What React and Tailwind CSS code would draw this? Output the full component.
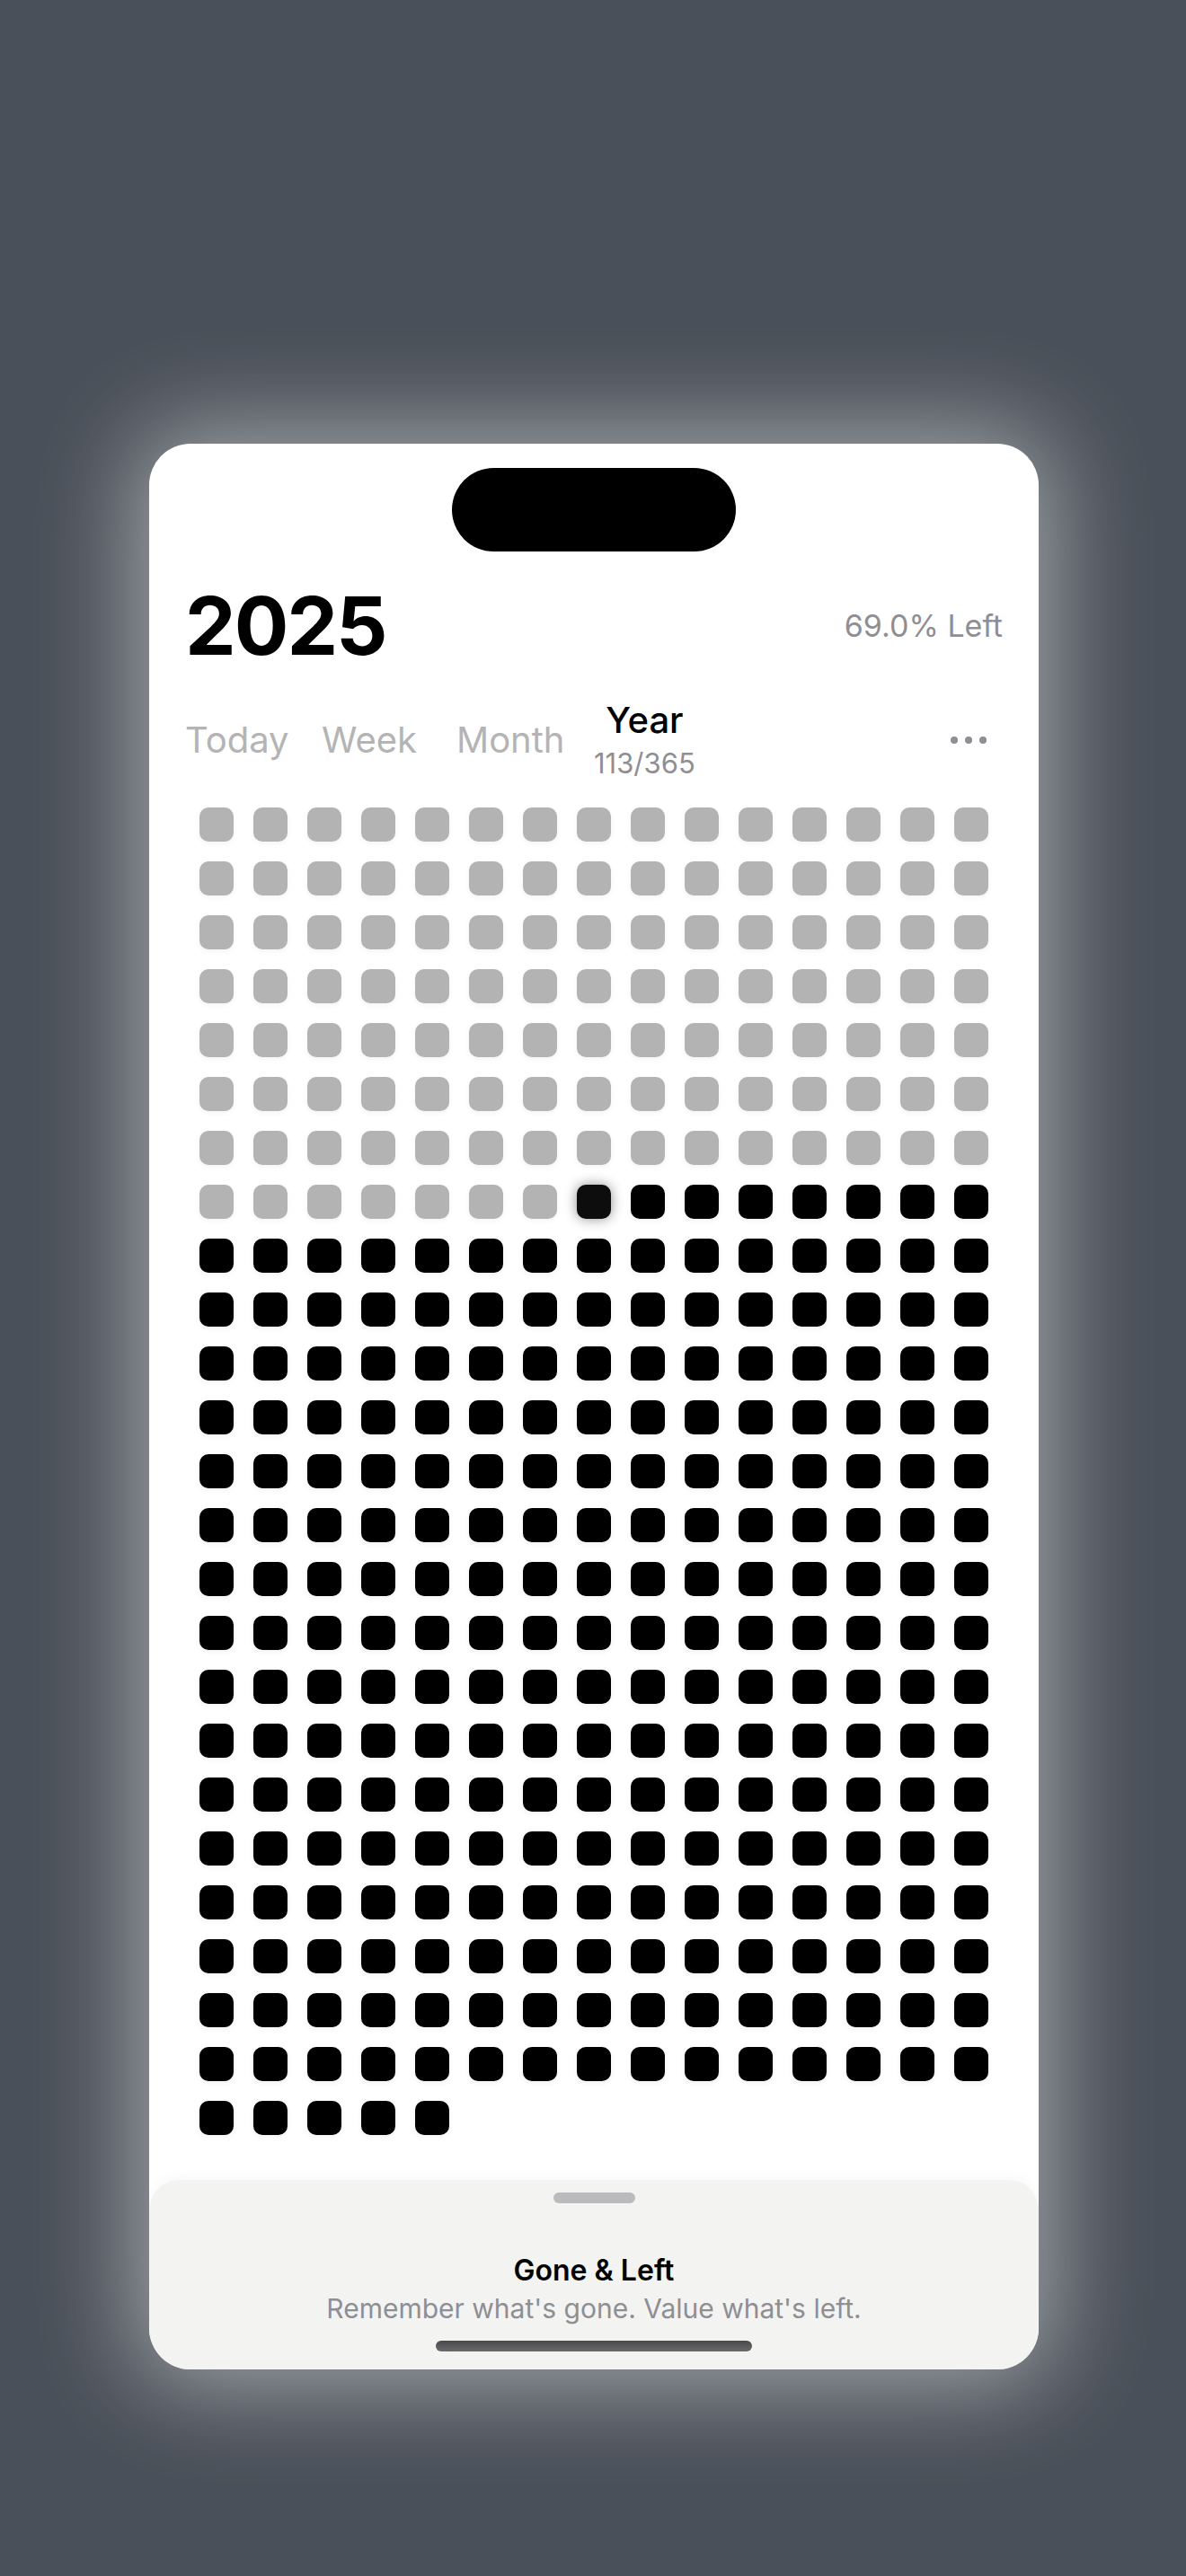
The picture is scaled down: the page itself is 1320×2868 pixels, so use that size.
import React from 'react';

const TOTAL_DAYS = 365;
const TODAY_INDEX = 112; // day 113 of the year

const tabs = [
  { label: 'Today', width: 'w-[152px]' },
  { label: 'Week', width: 'w-[150px]' },
  { label: 'Month', width: 'w-[153px]' },
];

const DayCell = ({ index }) => {
  if (index === TODAY_INDEX) {
    return <div className="w-[38px] h-[38px] rounded-[10px] bg-[#0d0d0d] shadow-[0_0_14px_rgba(0,0,0,0.45)]" />;
  }
  if (index < TODAY_INDEX) {
    return <div className="w-[38px] h-[38px] rounded-[10px] bg-[#b3b3b3] shadow-[0_2px_6px_rgba(0,0,0,0.05)]" />;
  }
  return <div className="w-[38px] h-[38px] rounded-[10px] bg-black shadow-[0_2px_6px_rgba(0,0,0,0.06)]" />;
};

const App = () => {
  const days = Array.from({ length: TOTAL_DAYS }, (_, i) => i);

  return (
    <div
      className="w-full h-[2868px] bg-[#4a5059] flex justify-center pt-[494px] pl-[2px]"
      style={{ fontFamily: 'Inter, "Noto Sans", sans-serif' }}
    >
      <div className="w-[990px] h-[2144px] bg-white rounded-[46px] overflow-hidden flex flex-col shadow-[0_0_110px_18px_rgba(255,255,255,0.48)]">
        {/* dynamic island */}
        <div className="mt-[27px] mx-auto w-[316px] h-[93px] rounded-full bg-black" />

        {/* header */}
        <div className="mt-[38px] px-[40px] flex items-center justify-between">
          <div className="text-[90px] leading-none font-bold text-black tracking-[-2px]">2025</div>
          <div className="text-[34px] leading-none text-[#8e8e93]">69.0% Left</div>
        </div>

        {/* tabs */}
        <div className="mt-[40px] pl-[40px] pr-[37px] flex items-center">
          {tabs.map((t) => (
            <div key={t.label} className={`${t.width} text-[40px] leading-none text-[#b4b4b4]`}>
              {t.label}
            </div>
          ))}
          <div className="flex flex-col items-center">
            <div className="text-[40px] leading-none text-black font-medium">Year</div>
            <div className="mt-[12px] text-[31px] leading-none text-[#8e8e93]">113/365</div>
          </div>
          <div className="ml-auto w-[61px] h-[44px] flex items-center gap-[8px]">
            <span className="w-[8px] h-[8px] rounded-full bg-[#8e8e93]" />
            <span className="w-[8px] h-[8px] rounded-full bg-[#8e8e93]" />
            <span className="w-[8px] h-[8px] rounded-full bg-[#8e8e93]" />
          </div>
        </div>

        {/* day grid */}
        <div className="mt-[34px] grid grid-cols-[repeat(15,38px)] gap-[22px] justify-center">
          {days.map((d) => (
            <DayCell key={d} index={d} />
          ))}
        </div>

        {/* bottom sheet */}
        <div className="mt-auto h-[211px] bg-[#f3f3f2] rounded-t-[34px] shadow-[0_-4px_14px_rgba(0,0,0,0.03)] flex flex-col items-center">
          <div className="mt-[14px] w-[91px] h-[12px] rounded-full bg-[#b9bbbe]" />
          <div className="mt-[59px] text-[32px] leading-none font-semibold text-black">Gone &amp; Left</div>
          <div className="mt-[11px] text-[30px] leading-none text-[#8e8e93]">Remember what's gone. Value what's left.</div>
          <div className="mt-[21px] w-[352px] h-[12px] rounded-full bg-gradient-to-b from-[#4a4a4c] to-[#6a6a6c]" />
        </div>
      </div>
    </div>
  );
};

export default App;
